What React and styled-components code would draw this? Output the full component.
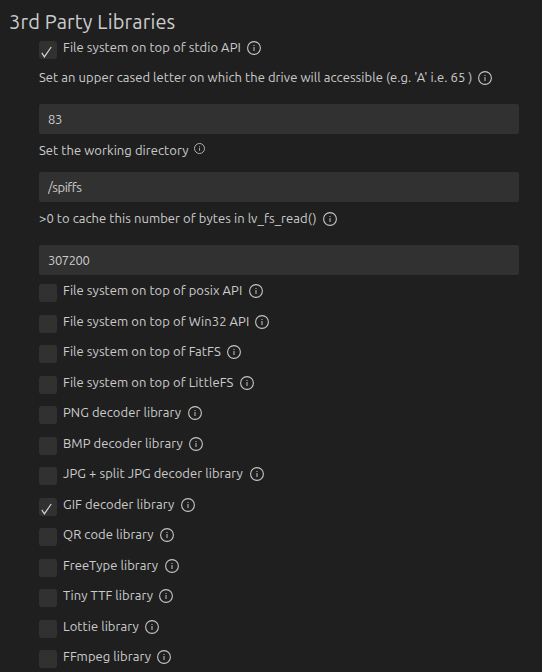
import React from "react";
import styled, { createGlobalStyle } from "styled-components";

const GlobalStyle = createGlobalStyle`
  body {
    margin: 0;
    background-color: #1f1f1f;
    color: #cccccc;
    font-family: Ubuntu, "Noto Sans", "Open Sans", sans-serif;
    font-size: 13px;
    overflow: hidden;
  }
`;

const Page = styled.main`
  box-sizing: border-box;
  height: 672px;
  padding: 8px 23px 0 9px;
  overflow: hidden;
`;

const Title = styled.h2`
  margin: 0;
  height: 28px;
  line-height: 28px;
  font-size: 20px;
  font-weight: 400;
  letter-spacing: 0.15px;
  white-space: nowrap;
`;

const Section = styled.div`
  padding: 0 0 0 30px;
`;

const CheckRow = styled.label`
  display: flex;
  align-items: flex-start;
  height: ${(props) => props.$height || 30.5}px;
`;

const Box = styled.span`
  flex: none;
  display: flex;
  width: 18px;
  height: 18px;
  margin: 5px 6px 0 0;
  border-radius: 3px;
  background-color: #313131;
`;

const Text = styled.span`
  flex: none;
  width: ${(props) => props.$width}px;
  height: 24px;
  line-height: ${(props) => props.$line || 24}px;
  margin-right: 6px;
  letter-spacing: 0.06px;
  white-space: nowrap;
`;

const IconSlot = styled.span`
  display: flex;
  padding-top: ${(props) => props.$top}px;
`;

const FieldLabel = styled.div`
  display: flex;
  height: ${(props) => props.$height}px;
`;

const Input = styled.input`
  display: block;
  box-sizing: border-box;
  width: 480px;
  height: 30px;
  margin: 0 0 4px;
  padding: 0 9px;
  border: 0;
  border-radius: 2px;
  outline: none;
  background-color: #313131;
  color: #cccccc;
  font: inherit;
  letter-spacing: -0.45px;
`;

function InfoIcon({ size = 14 }) {
  return (
    <svg width={size} height={size} viewBox="0 0 14 14" fill="none">
      <circle cx="7" cy="7" r="6.4" stroke="#c5c5c5" strokeWidth="1.1" />
      <path d="M6.5 4h1v1h-1zM6.5 6h1v4h-1z" fill="#c5c5c5" />
    </svg>
  );
}

function Check() {
  return (
    <svg width="18" height="18" viewBox="0 0 18 18" fill="none">
      <path d="M2.8 11.8 5.4 15.8 12.2 6" stroke="#d4d4d4" strokeWidth="1.2" />
    </svg>
  );
}

function Option({ label, width, checked, height }) {
  return (
    <CheckRow $height={height}>
      <Box>{checked && <Check />}</Box>
      <Text $width={width} $line={22}>{label}</Text>
      <IconSlot $top={5}>
        <InfoIcon />
      </IconSlot>
    </CheckRow>
  );
}

function Field({ label, width, value, labelHeight, iconSize, iconTop = 6 }) {
  return (
    <>
      <FieldLabel $height={labelHeight}>
        <Text $width={width}>{label}</Text>
        <IconSlot $top={iconTop}>
          <InfoIcon size={iconSize} />
        </IconSlot>
      </FieldLabel>
      <Input defaultValue={value} />
    </>
  );
}

const options = [
  { label: "File system on top of posix API", width: 180 },
  { label: "File system on top of Win32 API", width: 186 },
  { label: "File system on top of FatFS", width: 158 },
  { label: "File system on top of LittleFS", width: 171 },
  { label: "PNG decoder library", width: 119 },
  { label: "BMP decoder library", width: 120 },
  { label: "JPG + split JPG decoder library", width: 181 },
  { label: "GIF decoder library", width: 112, checked: true },
  { label: "QR code library", width: 91 },
  { label: "FreeType library", width: 96 },
  { label: "Tiny TTF library", width: 90 },
  { label: "Lottie library", width: 76 },
  { label: "FFmpeg library", width: 88 },
];

function App() {
  return (
    <>
      <GlobalStyle />
      <Page>
        <Title>3rd Party Libraries</Title>
        <Section>
          <Option label="File system on top of stdio API" width={178} checked height={29} />
          <Field
            label="Set an upper cased letter on which the drive will accessible (e.g. 'A' i.e. 65 )"
            width={433}
            value="83"
            labelHeight={39}
          />
          <Field
            label="Set the working directory"
            width={149}
            value="/spiffs"
            labelHeight={34}
            iconSize={11}
            iconTop={5}
          />
          <Field
            label=">0 to cache this number of bytes in lv_fs_read()"
            width={278}
            value="307200"
            labelHeight={39}
          />
          {options.map((option) => (
            <Option key={option.label} {...option} />
          ))}
        </Section>
      </Page>
    </>
  );
}

export default App;
